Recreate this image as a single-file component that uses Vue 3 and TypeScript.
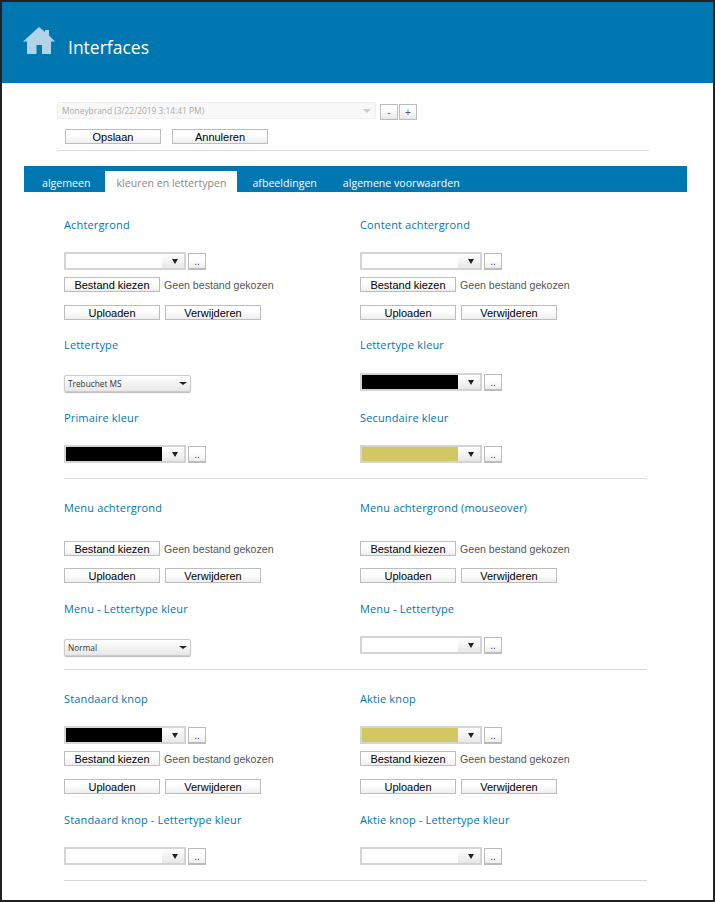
<script setup lang="ts">
interface Field {
  label: string
  kind: 'color' | 'font' | 'file'
  swatch?: string
  text?: string
  upload?: boolean
  low?: boolean
}
interface Row { height: number; fields: Field[] }
interface Section { rows: Row[] }

const sections: Section[] = [
  {
    rows: [
      { height: 120, fields: [
        { label: 'Achtergrond', kind: 'color', upload: true },
        { label: 'Content achtergrond', kind: 'color', upload: true },
      ] },
      { height: 73, fields: [
        { label: 'Lettertype', kind: 'font', text: 'Trebuchet MS' },
        { label: 'Lettertype kleur', kind: 'color', swatch: '#000000', low: true },
      ] },
      { height: 60, fields: [
        { label: 'Primaire kleur', kind: 'color', swatch: '#000000' },
        { label: 'Secundaire kleur', kind: 'color', swatch: '#d3c763' },
      ] },
    ],
  },
  {
    rows: [
      { height: 101, fields: [
        { label: 'Menu achtergrond', kind: 'file', upload: true },
        { label: 'Menu achtergrond (mouseover)', kind: 'file', upload: true },
      ] },
      { height: 60, fields: [
        { label: 'Menu - Lettertype kleur', kind: 'font', text: 'Normal' },
        { label: 'Menu - Lettertype', kind: 'color' },
      ] },
    ],
  },
  {
    rows: [
      { height: 121, fields: [
        { label: 'Standaard knop', kind: 'color', swatch: '#000000', upload: true },
        { label: 'Aktie knop', kind: 'color', swatch: '#d3c763', upload: true },
      ] },
      { height: 60, fields: [
        { label: 'Standaard knop - Lettertype kleur', kind: 'color' },
        { label: 'Aktie knop - Lettertype kleur', kind: 'color' },
      ] },
    ],
  },
]
const tabs = ['algemeen', 'kleuren en lettertypen', 'afbeeldingen', 'algemene voorwaarden']
</script>

<template>
  <div class="frame">
    <header class="top">
      <svg class="home" width="32" height="27" viewBox="0 0 32 27">
        <path d="M16 0 L22 5 V3 H26 V8.5 L32 14.5 H28 V27 H19 V18 H13.5 V27 H4 V14.5 H0 Z" fill="#b0d3e8" />
      </svg>
      <h1>Interfaces</h1>
    </header>

    <div class="toolbar">
      <div class="brand-row">
        <div class="brand">Moneybrand (3/22/2019 3:14:41 PM)<span class="brand-caret"></span></div>
        <button class="mini first" type="button">-</button>
        <button class="mini" type="button">+</button>
      </div>
      <div class="actions">
        <button class="btn" type="button">Opslaan</button>
        <button class="btn" type="button">Annuleren</button>
      </div>
    </div>

    <nav class="tabs">
      <a v-for="(t, i) in tabs" :key="t" class="tab" :class="{ active: i === 1 }">{{ t }}</a>
    </nav>

    <section v-for="(s, si) in sections" :key="si" class="section">
      <div v-for="(r, ri) in s.rows" :key="ri" class="row" :style="{ height: r.height + 'px' }">
        <div v-for="f in r.fields" :key="f.label" class="field">
          <div class="label" :class="{ tall: f.kind === 'file', low: f.low }">{{ f.label }}</div>
          <div v-if="f.kind === 'font'" class="fontsel">{{ f.text }}<span class="caret"></span></div>
          <div v-if="f.kind === 'color'" class="colorline">
            <div class="colorsel">
              <div class="swatch" :style="{ background: f.swatch || '#fff' }"></div>
              <div class="drop"><span class="caret"></span></div>
            </div>
            <button class="dots" type="button">..</button>
          </div>
          <template v-if="f.upload">
            <div class="fileline" :class="{ bare: f.kind === 'file' }">
              <button class="btn" type="button">Bestand kiezen</button>
              <span class="nofile">Geen bestand gekozen</span>
            </div>
            <div class="uploadline" :class="{ bare: f.kind === 'file' }">
              <button class="btn" type="button">Uploaden</button>
              <button class="btn" type="button">Verwijderen</button>
            </div>
          </template>
        </div>
      </div>
    </section>
  </div>
</template>

<style>
html, body { margin: 0; background: #fff; }
</style>

<style scoped>
.frame {
  box-sizing: border-box;
  width: 715px;
  height: 902px;
  border: 2px solid #222;
  overflow: hidden;
  background: #fff;
  font-family: "Open Sans", sans-serif;
}
.top {
  height: 81px;
  background: #0077b0;
  display: flex;
  align-items: center;
  padding-left: 21px;
  box-sizing: border-box;
}
.home { margin-top: -5px; }
.top h1 {
  margin: 8px 0 0 13px;
  font-size: 17.5px;
  font-weight: 400;
  color: #fff;
}
.toolbar { margin: 19px 64px 0 55px; height: 48px; border-bottom: 1px solid #d8d8d8; }
.brand-row { display: flex; align-items: flex-start; }
.brand {
  box-sizing: border-box;
  width: 319px;
  height: 17px;
  border: 1px solid #eee;
  background: #f8f8f8;
  border-radius: 2px;
  color: #aaa;
  font-size: 8.4px;
  line-height: 15px;
  padding-left: 4px;
  position: relative;
}
.brand-caret {
  position: absolute;
  right: 4px;
  top: 6px;
  border: 4px solid transparent;
  border-top: 4px solid #ccc;
  border-bottom: 0;
}
.mini {
  box-sizing: border-box;
  width: 18px;
  height: 16px;
  margin: 2px 0 0 1px;
  padding: 0;
  border: 1px solid #bbb;
  background: linear-gradient(#fff 30%, #e8e8e8);
  font: 10px/13px "Liberation Sans", sans-serif;
  color: #555;
}
.mini.first { margin-left: 4px; }
.actions { display: flex; gap: 11px; margin: 9px 0 0 8px; }
.btn {
  box-sizing: border-box;
  width: 96px;
  height: 15px;
  padding: 1px 0 0;
  border: 1px solid #bdbdbd;
  background: linear-gradient(#fff 40%, #eee);
  font: 11px/13px "Liberation Sans", sans-serif;
  color: #000;
}
.tabs {
  margin: 15px 26px 0 22px;
  height: 26px;
  background: #0077b0;
  display: flex;
  align-items: flex-end;
  padding-left: 18px;
}
.tab {
  font-size: 10.6px;
  line-height: 25px;
  height: 21px;
  color: #fff;
  margin-right: 15px;
  white-space: nowrap;
}
.tab:nth-child(3) { margin-right: 26px; }
.tab.active {
  background: #fff;
  color: #888;
  width: 132px;
  text-align: center;
}
.section {
  margin: 0 66px 0 62px;
  padding-top: 25px;
  height: 287px;
  box-sizing: border-box;
  border-bottom: 1px solid #d8d8d8;
}
.section:nth-of-type(2) { height: 191px; padding-top: 21px; }
.section:nth-of-type(3) { height: 211px; padding-top: 21px; }
.row { display: grid; grid-template-columns: 296px 1fr; }
.label {
  font-size: 11px;
  line-height: 15px;
  color: #0077b0;
  letter-spacing: 0.15px;
  height: 35px;
}
.label.low { height: 36px; }
.label.tall { height: 41px; }
.colorline { display: flex; align-items: flex-start; }
.colorsel {
  box-sizing: border-box;
  width: 122px;
  height: 18px;
  border: 2px solid #d4d4d4;
  display: flex;
  background: #fff;
}
.swatch { width: 96px; }
.drop {
  flex: 1;
  background: linear-gradient(#fff, #e8e8e8);
  display: flex;
  align-items: center;
  justify-content: center;
  padding-left: 3px;
}
.caret {
  display: block;
  width: 0;
  height: 0;
  border: 3.5px solid transparent;
  border-top: 5px solid #222;
  border-bottom: 0;
}
.dots {
  box-sizing: border-box;
  width: 18px;
  height: 17px;
  margin: 1px 0 0 2px;
  padding: 0;
  border: 1px solid #bbb;
  border-bottom-width: 2px;
  background: linear-gradient(#fff 40%, #eee);
  font: 10px/16px "Liberation Sans", sans-serif;
  color: #444;
}
.fontsel {
  box-sizing: border-box;
  width: 127px;
  height: 17px;
  margin-top: 3px;
  border: 1px solid #ccc;
  border-radius: 2px;
  box-shadow: 0 1px 1px #bbb;
  background: linear-gradient(#fff, #e8e8e8);
  font-size: 8.3px;
  line-height: 15px;
  padding-left: 3px;
  color: #333;
  position: relative;
}
.fontsel .caret {
  position: absolute;
  right: 3px;
  top: 6px;
  border-width: 3px 4px 0;
  border-top: 3px solid #222;
}
.fileline { display: flex; align-items: center; margin-top: 7px; }
.fileline.bare { margin-top: 0; }
.nofile { font: 10.6px "Liberation Sans", sans-serif; color: #555; margin-left: 4px; white-space: nowrap; }
.uploadline { display: flex; gap: 5px; margin-top: 13px; }
.uploadline.bare { margin-top: 12px; }
</style>
